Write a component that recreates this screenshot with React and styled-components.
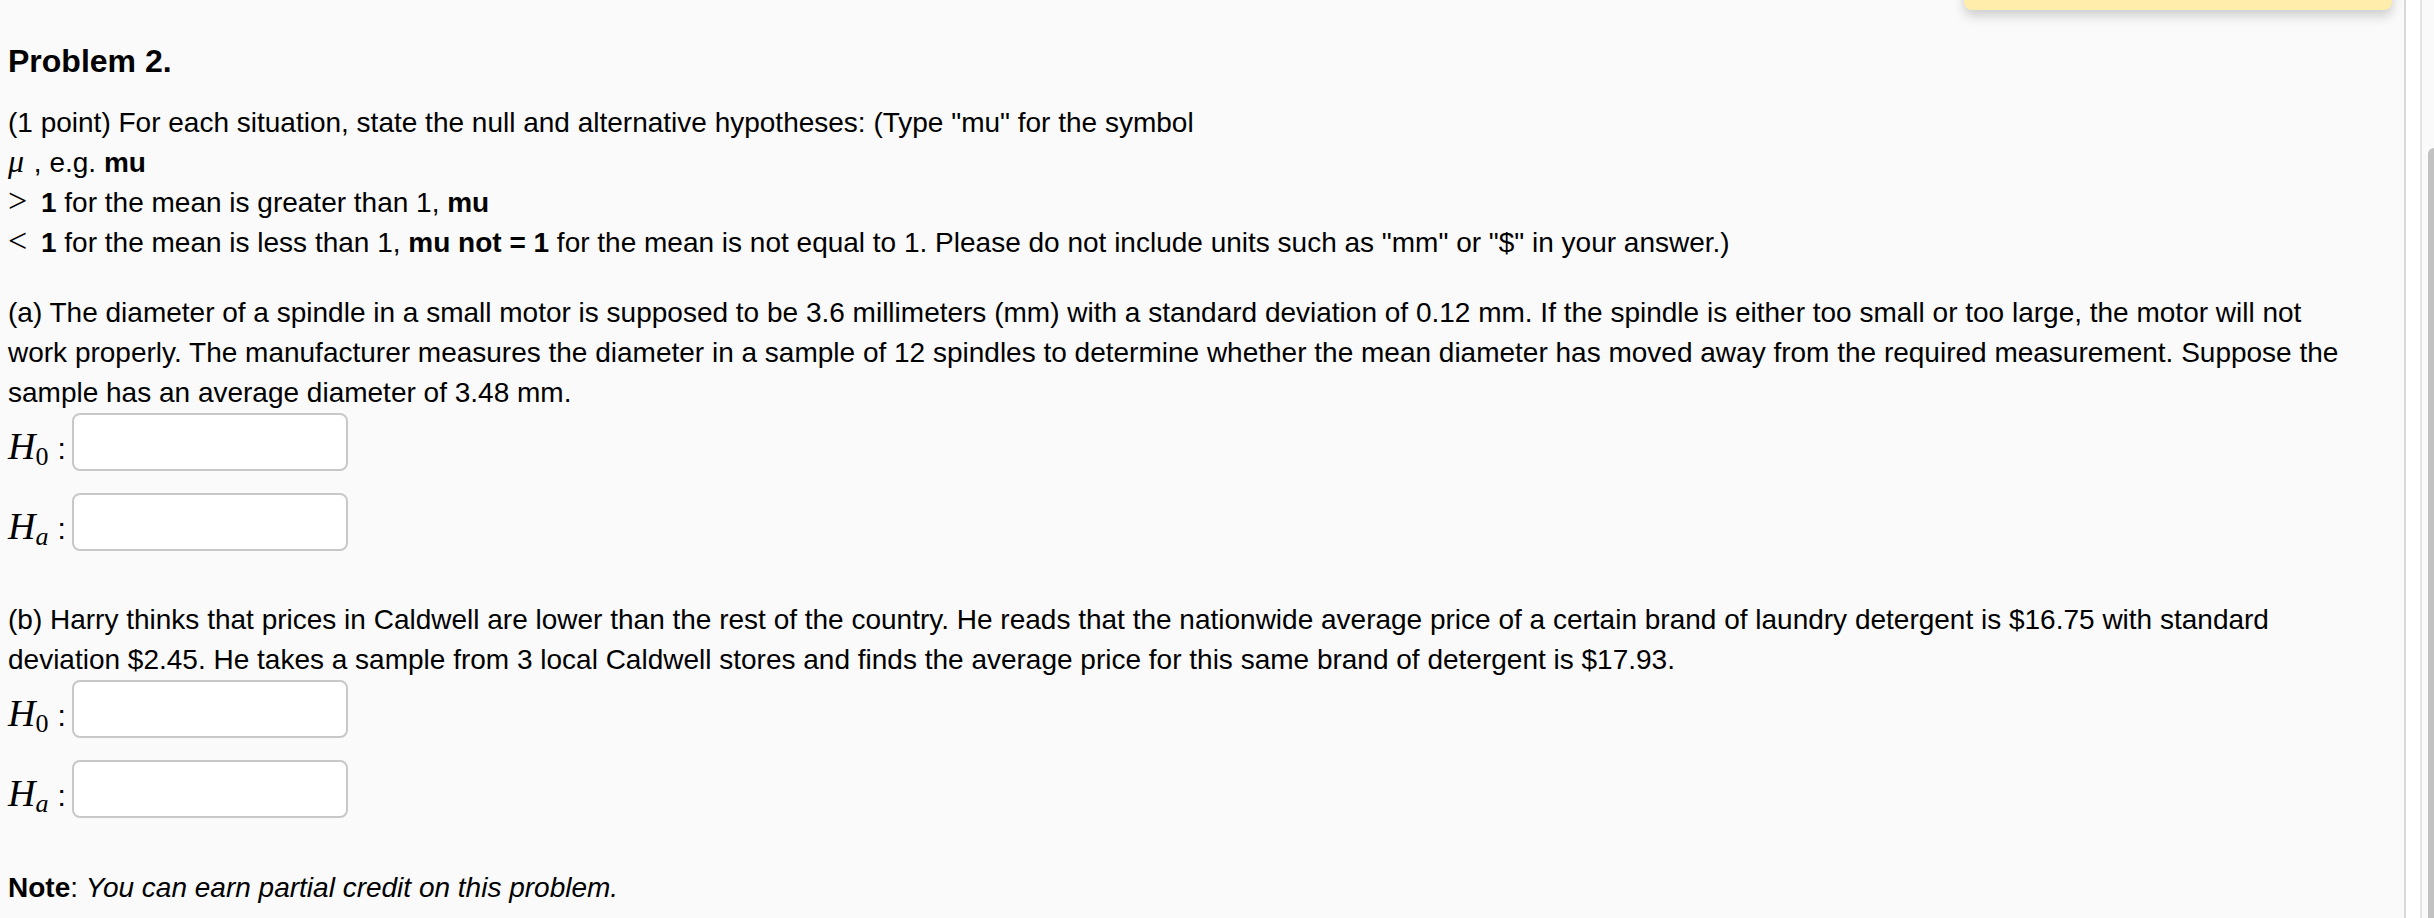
import React from "react"
import styled, { createGlobalStyle } from "styled-components"

const GlobalStyle = createGlobalStyle`
  html, body, #root {
    margin: 0;
    height: 100%;
  }
  body {
    overflow: hidden;
    background: #fafafa;
    color: #000;
    font-family: "Liberation Sans", Arial, Helvetica, sans-serif;
  }
`

const Frame = styled.div`
  position: relative;
  display: flex;
  height: 918px;
  overflow: hidden;
`

const Main = styled.main`
  flex: 0 0 2406px;
  box-sizing: border-box;
  padding: 41px 44px 0 8px;
  background: #fafafa;
  border-right: 2px solid #d9d9d9;
  font-size: 28px;
  line-height: 40px;
`

const Gutter = styled.div`
  flex: 0 0 14px;
  background: #fff;
`

const ScrollTrack = styled.div`
  flex: 0 0 14px;
  box-sizing: border-box;
  background: #fafafa;
  border-left: 2px solid #e4e4e4;
  overflow: hidden;
`

const ScrollThumb = styled.div`
  margin: 148px 0 0 6px;
  width: 12px;
  height: 900px;
  background: #c1c1c1;
  border-radius: 7px;
`

const Notice = styled.div`
  position: absolute;
  top: -40px;
  left: 1964px;
  width: 428px;
  height: 50px;
  background: #ffedab;
  border-radius: 0 0 8px 8px;
  box-shadow: 0 6px 12px rgba(0, 0, 0, 0.18);
`

const Title = styled.h3`
  margin: 0;
  font-size: 32px;
  line-height: 40px;
  font-weight: bold;
`

const Para = styled.p`
  margin: ${p => p.$top}px 0 0;
`

const MathVar = styled.span`
  font-family: "Liberation Serif", "Times New Roman", serif;
  font-style: italic;
  font-size: 32px;
  line-height: 1;
  margin-right: 2px;
`

const MathOp = styled.span`
  font-family: "Liberation Serif", "Times New Roman", serif;
  font-size: 34px;
  line-height: 1;
  margin-right: 6px;
`

const Answers = styled.div`
  display: flex;
  flex-direction: column;
  gap: 22px;
  margin-top: ${p => p.$top}px;
`

const AnswerRow = styled.div`
  display: flex;
  align-items: center;
`

const Label = styled.div`
  flex: 0 0 64px;
  display: flex;
  align-items: baseline;
  margin-top: 8px;
  line-height: 1;
`

const HSym = styled.span`
  font-family: "Liberation Serif", "Times New Roman", serif;
  font-style: italic;
  font-size: 38px;
`

const Sub = styled.span`
  font-family: "Liberation Serif", "Times New Roman", serif;
  font-style: ${p => (p.$italic ? "italic" : "normal")};
  font-size: 26px;
  position: relative;
  top: 6px;
`

const Colon = styled.span`
  font-size: 30px;
  margin-left: 9px;
`

const AnswerBox = styled.input`
  box-sizing: border-box;
  width: 276px;
  height: 58px;
  border: 2px solid #c8c8c8;
  border-radius: 8px;
  background: #fff;
  padding: 0 10px;
  font-size: 28px;
  outline: none;
`

const Note = styled.p`
  margin: 50px 0 0;
`

const Hypotheses = ({ top }) => (
  <Answers $top={top}>
    <AnswerRow>
      <Label>
        <HSym>H</HSym>
        <Sub>0</Sub>
        <Colon>:</Colon>
      </Label>
      <AnswerBox type="text" />
    </AnswerRow>
    <AnswerRow>
      <Label>
        <HSym>H</HSym>
        <Sub $italic>a</Sub>
        <Colon>:</Colon>
      </Label>
      <AnswerBox type="text" />
    </AnswerRow>
  </Answers>
)

export default function App() {
  return (
    <Frame>
      <GlobalStyle />
      <Main>
        <Title>Problem 2.</Title>

        <Para $top={22}>
          (1 point) For each situation, state the null and alternative hypotheses: (Type "mu" for the symbol
          <br />
          <MathVar>μ</MathVar> , e.g. <b>mu</b>
          <br />
          <MathOp>&gt;</MathOp> <b>1</b> for the mean is greater than 1, <b>mu</b>
          <br />
          <MathOp>&lt;</MathOp> <b>1</b> for the mean is less than 1, <b>mu not = 1</b> for the mean is not
          equal to 1. Please do not include units such as "mm" or "$" in your answer.)
        </Para>

        <Para $top={30}>
          (a) The diameter of a spindle in a small motor is supposed to be 3.6 millimeters (mm) with a standard
          deviation of 0.12 mm. If the spindle is either too small or too large, the motor will not work
          properly. The manufacturer measures the diameter in a sample of 12 spindles to determine whether the
          mean diameter has moved away from the required measurement. Suppose the sample has an average
          diameter of 3.48 mm.
        </Para>
        <Hypotheses top={0} />

        <Para $top={49}>
          (b) Harry thinks that prices in Caldwell are lower than the rest of the country. He reads that the
          nationwide average price of a certain brand of laundry detergent is $16.75 with standard deviation
          $2.45. He takes a sample from 3 local Caldwell stores and finds the average price for this same brand
          of detergent is $17.93.
        </Para>
        <Hypotheses top={0} />

        <Note>
          <b>Note</b>: <i>You can earn partial credit on this problem.</i>
        </Note>
      </Main>
      <Gutter />
      <ScrollTrack>
        <ScrollThumb />
      </ScrollTrack>
      <Notice />
    </Frame>
  )
}
